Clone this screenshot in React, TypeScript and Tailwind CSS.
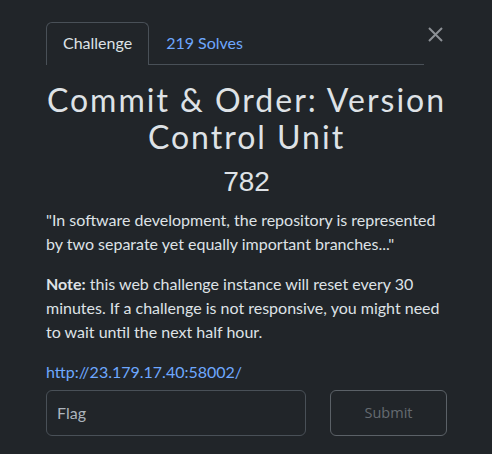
import React from "react";

export default function App() {
  return (
    <div className="w-[492px] h-[454px] bg-[#212529] text-[#dee2e6] font-['Lato','Noto_Sans',sans-serif] overflow-hidden">
      <div className="pl-[46px] pr-[45px] pt-[22px]">
        <div className="flex items-stretch">
          <div className="flex flex-1 border-b border-[#495057]">
            <div className="px-4 py-2 text-[16px] leading-6 text-[#dee2e6] border border-[#495057] border-b-0 rounded-t-[6px] -mb-px bg-[#212529] relative">
              Challenge
            </div>
            <div className="px-4 py-2 text-[16px] leading-6 text-[#6ea8fe] border border-transparent">
              219 Solves
            </div>
          </div>
          <div className="w-[23px] flex items-start justify-center pt-[5px]">
            <svg width="15" height="15" viewBox="0 0 15 15">
              <path d="M1 1 L14 14 M14 1 L1 14" stroke="#8c9095" strokeWidth="2" />
            </svg>
          </div>
        </div>

        <h1 className="mt-4 text-center text-[32px] leading-[37px] tracking-[2px] text-[#dee2e6] font-normal">
          Commit &amp; Order: Version Control Unit
        </h1>
        <div className="mt-[10px] text-center text-[28px] leading-[34px] font-['Liberation_Sans',Arial,sans-serif] text-[#dee2e6]">
          782
        </div>

        <div className="mt-[9px] text-[16px] leading-6">
          <p className="mb-4">
            "In software development, the repository is represented by two separate yet equally important branches..."
          </p>
          <p className="mb-4">
            <b className="font-bold">Note:</b> this web challenge instance will reset every 30 minutes. If a challenge is not responsive, you might need to wait until the next half hour.
          </p>
          <p>
            <a className="text-[#6ea8fe]">http://23.179.17.40:58002/</a>
          </p>
        </div>

        <div className="mt-[6px] flex gap-6">
          <div className="w-[260px] h-[46px] border border-[#495057] rounded-[6px] flex items-center px-[10px] text-[16px] text-[#adb5bd]">
            Flag
          </div>
          <div className="flex-1 h-[46px] border border-[#5b6167] rounded-[6px] flex items-center justify-center text-[14.5px] font-['Open_Sans',sans-serif] text-[#656b71]">
            Submit
          </div>
        </div>
      </div>
    </div>
  );
}
